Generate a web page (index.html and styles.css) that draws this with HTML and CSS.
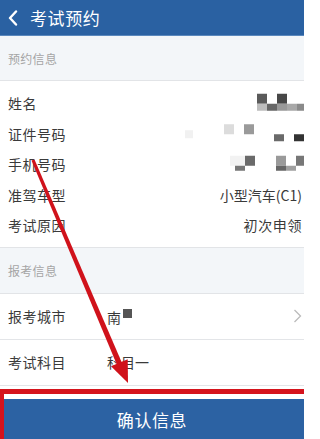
FILE: index.html
```html
<!DOCTYPE html>
<html lang="zh">
<head>
<meta charset="utf-8">
<title>考试预约</title>
<link rel="stylesheet" href="styles.css">
</head>
<body>
<div class="page">
  <header class="header">
    <svg class="back" viewBox="0 0 10 16" width="10" height="16"><path d="M8 1.5 L2 8 L8 14.5" fill="none" stroke="#fff" stroke-width="2.4" stroke-linecap="round" stroke-linejoin="round"/></svg>
    <span class="title">考试预约</span>
  </header>

  <div class="band">预约信息</div>
  <div class="rows">
    <div class="row">
      <span class="label">姓名</span>
      <svg class="mosaic" viewBox="184 88.25 120 30" width="120" height="30">
        <rect x="257" y="94" width="10" height="10" fill="#5a5a5a"/>
        <rect x="277" y="94" width="10" height="10" fill="#474747"/>
        <rect x="257" y="104" width="10" height="7" fill="#bdbdbd"/>
        <rect x="267" y="104" width="10" height="7" fill="#666"/>
        <rect x="277" y="104" width="10" height="7" fill="#999"/>
        <rect x="287" y="104" width="10" height="7" fill="#a8a8a8"/>
        <rect x="297" y="104" width="7" height="7" fill="#8a8a8a"/>
      </svg>
    </div>
    <div class="row">
      <span class="label">证件号码</span>
      <svg class="mosaic" viewBox="184 118.75 120 30" width="120" height="30">
        <rect x="185" y="130" width="8" height="8" fill="#f1f1f1"/>
        <rect x="224" y="124" width="10" height="10" fill="#dcdcdc"/>
        <rect x="244" y="124" width="10" height="10" fill="#9a9a9a"/>
        <rect x="274" y="134" width="10" height="7" fill="#6a6a6a"/>
        <rect x="294" y="134" width="10" height="7" fill="#333"/>
      </svg>
    </div>
    <div class="row">
      <span class="label">手机号码</span>
      <svg class="mosaic" viewBox="184 149.25 120 30" width="120" height="30">
        <rect x="230" y="156" width="15" height="10" fill="#f2f2f2"/>
        <rect x="245" y="156" width="10" height="10" fill="#6a6a6a"/>
        <rect x="235" y="166" width="10" height="5" fill="#777"/>
        <rect x="276" y="156" width="10" height="10" fill="#9a9a9a"/>
        <rect x="276" y="166" width="10" height="5" fill="#666"/>
        <rect x="286" y="166" width="10" height="5" fill="#a0a0a0"/>
        <rect x="296" y="156" width="8" height="10" fill="#777"/>
      </svg>
    </div>
    <div class="row">
      <span class="label">准驾车型</span>
      <span class="value">小型汽车(C1)</span>
    </div>
    <div class="row">
      <span class="label">考试原因</span>
      <span class="value wide">初次申领</span>
    </div>
  </div>

  <div class="band band-top">报考信息</div>
  <div class="field">
    <span class="label">报考城市</span>
    <span class="fvalue">南<span class="blot"></span></span>
    <svg class="chev" viewBox="0 0 9 14" width="9" height="14"><path d="M1.5 1 L7.5 7 L1.5 13" fill="none" stroke="#bbb" stroke-width="1.3"/></svg>
  </div>
  <div class="field">
    <span class="label">考试科目</span>
    <span class="fvalue">科目一</span>
  </div>

  <div class="btn">确认信息</div>

  <div class="redbox"></div>
  <svg class="arrow" viewBox="0 0 304 439" width="304" height="439">
    <polygon points="31.5,160.5 34.5,159.5 122,363 117,365" fill="#d0121b"/>
    <polygon points="128,383 111,366.3 127.7,359.3" fill="#d0121b"/>
  </svg>
</div>
</body>
</html>
```

FILE: styles.css
```css
html, body {
  margin: 0;
  padding: 0;
  background: #fff;
}
body {
  font-family: "Noto Sans CJK SC", "Noto Sans", sans-serif;
  color: #333;
}
.page {
  position: relative;
  width: 304px;
  height: 439px;
  overflow: hidden;
  background: #fff;
}
.header {
  height: 35px;
  border-bottom: 1px solid #5a88bd;
  background: #2a61a2;
  display: flex;
  align-items: center;
  padding-left: 8px;
}
.back {
  display: block;
}
.title {
  margin-left: 12px;
  color: #fff;
  font-size: 17px;
  letter-spacing: 0.6px;
  line-height: 1;
}
.band {
  height: 44px;
  background: #f3f6f9;
  border-bottom: 1px solid #e2e4e7;
  display: flex;
  align-items: center;
  padding-left: 8px;
  font-size: 12px;
  color: #a5a5a5;
  letter-spacing: 0.3px;
}
.band-top {
  border-top: 1px solid #e2e4e7;
  padding-top: 1px;
  height: 44px;
}
.rows {
  padding: 7px 0 6px;
}
.row {
  height: 30.5px;
  display: flex;
  align-items: center;
  justify-content: space-between;
  padding-left: 8px;
}
.label {
  font-size: 14px;
  letter-spacing: 0.5px;
  color: #3a3a3a;
  line-height: 1;
}
.value {
  font-size: 14px;
  color: #3a3a3a;
  padding-right: 2px;
  line-height: 1;
}
.wide {
  letter-spacing: 0.6px;
}
.mosaic {
  display: block;
}
.field {
  height: 45px;
  border-bottom: 1px solid #e3e5e8;
  display: flex;
  align-items: center;
  padding-left: 8px;
}
.field .label {
  width: 99px;
}
.fvalue {
  font-size: 14px;
  color: #3a3a3a;
  line-height: 1;
  flex: 1;
}
.blot {
  display: inline-block;
  width: 9px;
  height: 9px;
  background: #555;
  vertical-align: 5px;
  margin-left: 2px;
}
.chev {
  display: block;
  margin-right: 2px;
}
.btn {
  margin-top: 13px;
  height: 42px;
  background: #2c62a3;
  color: #fff;
  font-size: 17px;
  letter-spacing: 0.6px;
  display: flex;
  align-items: center;
  justify-content: center;
}
.redbox {
  position: absolute;
  left: 0;
  top: 389px;
  width: 304px;
  height: 50px;
  border-top: 5px solid #d5131c;
  border-left: 4px solid #d5131c;
  box-sizing: border-box;
}
.arrow {
  position: absolute;
  left: 0;
  top: 0;
  pointer-events: none;
}
```
